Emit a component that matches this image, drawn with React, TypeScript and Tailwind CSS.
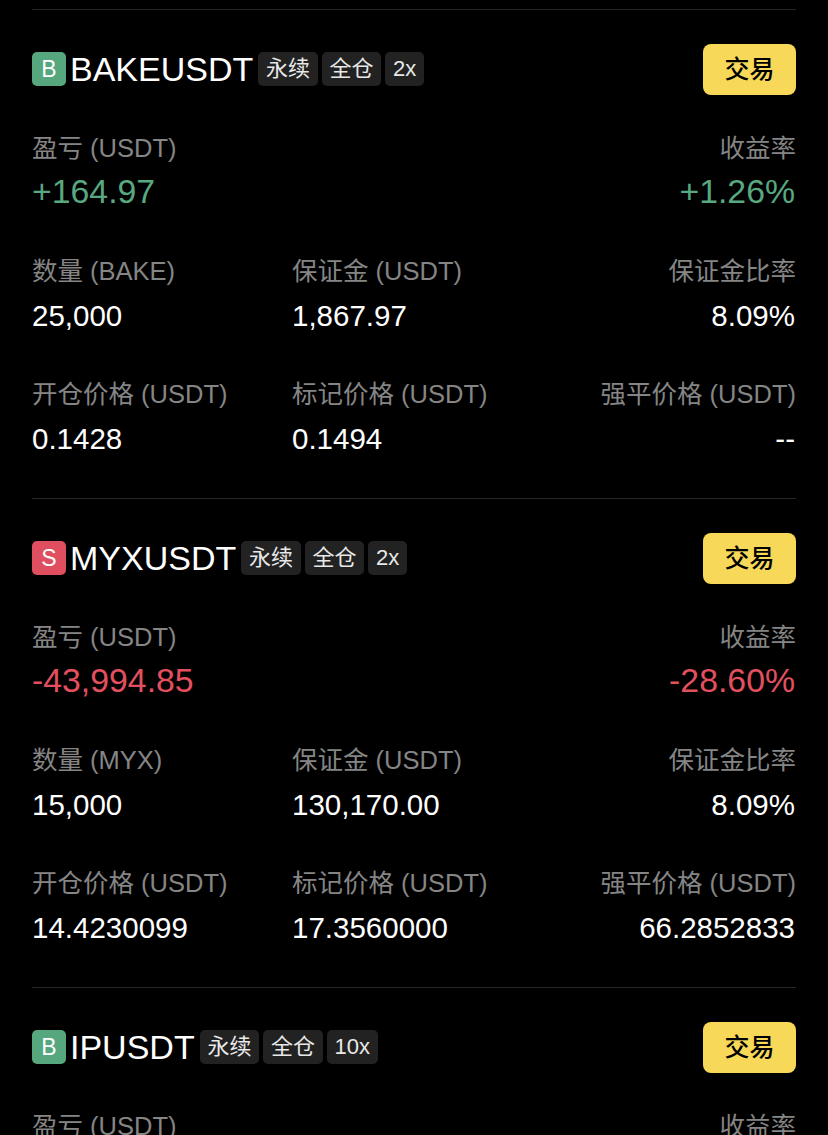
import React from 'react';

interface Cell {
  label: string;
  value: string;
}

interface Position {
  symbol: string;
  side: 'B' | 'S';
  leverage: string;
  pnl: string;
  roe: string;
  size: Cell;
  margin: string;
  ratio: string;
  entry: string;
  mark: string;
  liq: string;
}

const positions: Position[] = [
  {
    symbol: 'BAKEUSDT',
    side: 'B',
    leverage: '2x',
    pnl: '+164.97',
    roe: '+1.26%',
    size: { label: '数量 (BAKE)', value: '25,000' },
    margin: '1,867.97',
    ratio: '8.09%',
    entry: '0.1428',
    mark: '0.1494',
    liq: '--',
  },
  {
    symbol: 'MYXUSDT',
    side: 'S',
    leverage: '2x',
    pnl: '-43,994.85',
    roe: '-28.60%',
    size: { label: '数量 (MYX)', value: '15,000' },
    margin: '130,170.00',
    ratio: '8.09%',
    entry: '14.4230099',
    mark: '17.3560000',
    liq: '66.2852833',
  },
  {
    symbol: 'IPUSDT',
    side: 'B',
    leverage: '10x',
    pnl: '',
    roe: '',
    size: { label: '数量 (IP)', value: '' },
    margin: '',
    ratio: '',
    entry: '',
    mark: '',
    liq: '',
  },
];

const Tag = ({ text }: { text: string }) => (
  <span className="flex h-[34px] items-center rounded-[5px] bg-[#222222] px-[7.75px] text-[22px] leading-none text-[#e8e8e8]">
    {text}
  </span>
);

const Field = ({ label, value, right }: { label: string; value: string; right?: boolean }) => (
  <div className={right ? 'flex flex-col items-end' : 'flex flex-col items-start'}>
    <div className="h-[30px] whitespace-nowrap text-[25.5px] leading-[30px] text-[#858585]">{label}</div>
    <div
      className={
        right
          ? 'mt-[15px] mr-px h-[30px] whitespace-nowrap text-[29.5px] leading-[30px] text-white'
          : 'mt-[15px] h-[30px] whitespace-nowrap text-[29.5px] leading-[30px] text-white'
      }
    >
      {value}
    </div>
  </div>
);

const PositionCard = ({ p }: { p: Position }) => {
  const tone = p.side === 'B' ? 'text-[#58a880]' : 'text-[#e2505f]';
  return (
    <section className="h-[489px] border-t border-[#262626] pt-[34px]">
      {/* Header */}
      <div className="flex h-[51px] items-center justify-between">
        <div className="-mt-px flex items-center">
          <span
            className={
              p.side === 'B'
                ? 'flex h-[34px] w-[34px] items-center justify-center rounded-[5px] bg-[#56a67e] text-[23px] text-white'
                : 'flex h-[34px] w-[34px] items-center justify-center rounded-[5px] bg-[#e04f5f] text-[23px] text-white'
            }
          >
            {p.side}
          </span>
          <span className="ml-[4px] text-[34px] leading-none text-white">{p.symbol}</span>
          <div className="ml-[5px] flex gap-[4px]">
            <Tag text="永续" />
            <Tag text="全仓" />
            <Tag text={p.leverage} />
          </div>
        </div>
        <button className="flex h-[51px] w-[93px] items-center justify-center rounded-[8px] bg-[#f7d858] text-[25px] font-medium text-black">
          交易
        </button>
      </div>

      {/* PnL */}
      <div className="mt-[38px] flex justify-between">
        <div className="flex flex-col items-start">
          <div className="h-[30px] text-[25.5px] leading-[30px] text-[#858585]">盈亏 (USDT)</div>
          <div className={`mt-[10px] h-[36px] text-[33.8px] leading-[36px] ${tone}`}>{p.pnl}</div>
        </div>
        <div className="flex flex-col items-end">
          <div className="h-[30px] text-[25.5px] leading-[30px] text-[#858585]">收益率</div>
          <div className={`mt-[10px] mr-px h-[36px] text-[33.8px] leading-[36px] ${tone}`}>{p.roe}</div>
        </div>
      </div>

      {/* Details */}
      <div className="mt-[47px] grid grid-cols-[260px_1fr_auto] gap-y-[48px]">
        <Field label={p.size.label} value={p.size.value} />
        <Field label="保证金 (USDT)" value={p.margin} />
        <Field label="保证金比率" value={p.ratio} right />
        <Field label="开仓价格 (USDT)" value={p.entry} />
        <Field label="标记价格 (USDT)" value={p.mark} />
        <Field label="强平价格 (USDT)" value={p.liq} right />
      </div>
    </section>
  );
};

export default function App() {
  return (
    <div className="h-[1135px] overflow-hidden bg-black px-[32px] pt-[9px] font-['Liberation_Sans','Noto_Sans_CJK_SC',sans-serif]">
      {positions.map((p) => (
        <PositionCard key={p.symbol} p={p} />
      ))}
    </div>
  );
}
